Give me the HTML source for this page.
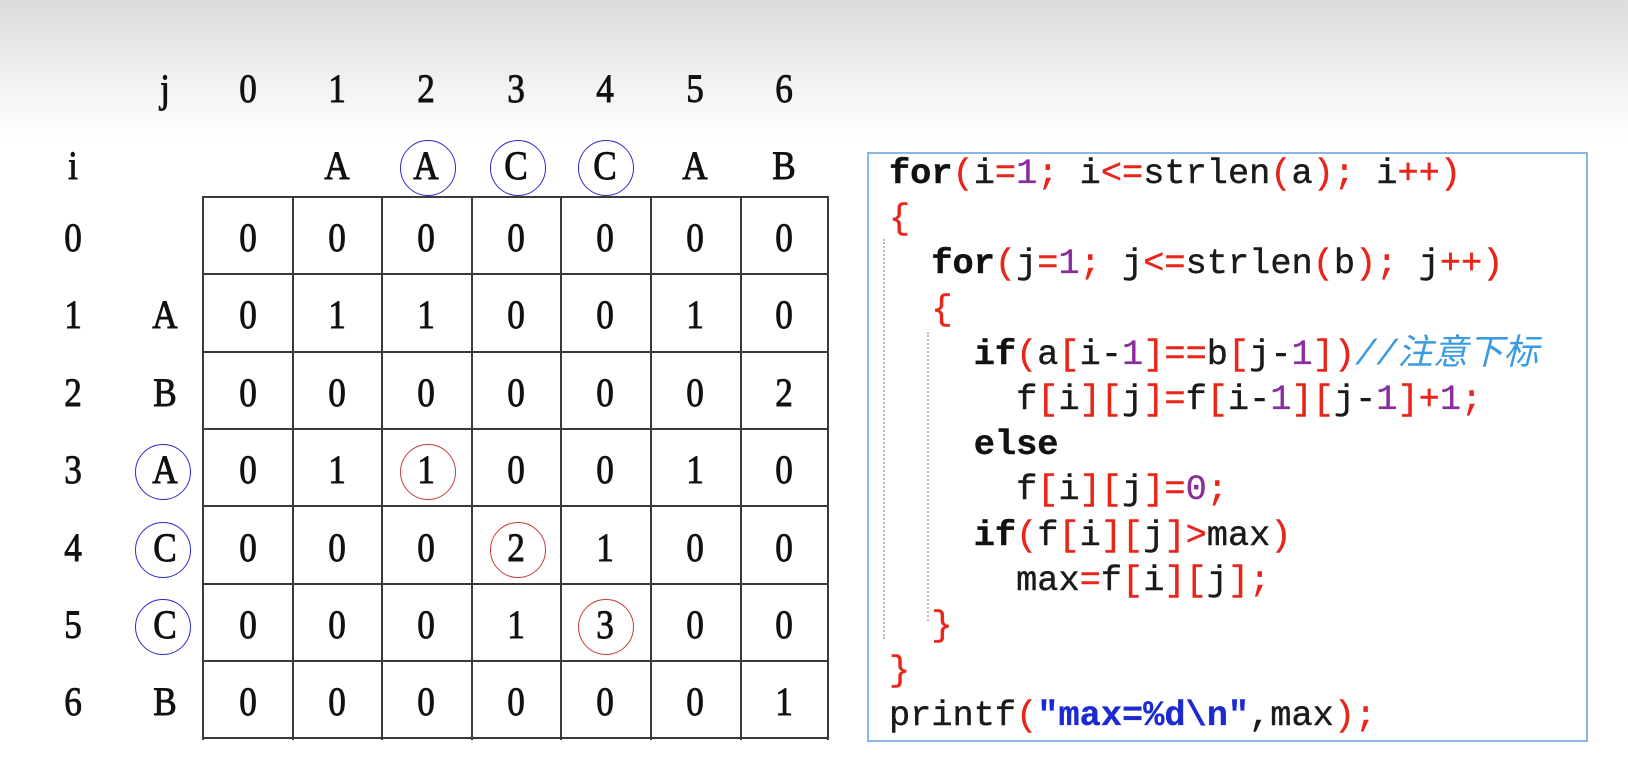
<!DOCTYPE html>
<html><head><meta charset="utf-8">
<style>
html,body{margin:0;padding:0}
body{width:1628px;height:774px;position:relative;overflow:hidden;
background:linear-gradient(#dcdcdc 0px,#ececec 60px,#fbfbfb 120px,#fff 140px,#fff 774px);
font-family:"Liberation Serif",serif;}
.t{position:absolute;width:60px;margin-left:-30px;text-align:center;font-size:40px;line-height:40px;margin-top:-20px;color:#111;transform:scaleX(.88);-webkit-text-stroke:0.9px #111}
.c{position:absolute;width:54px;height:54px;margin-left:-28px;margin-top:-26px;border-radius:50%;border:1.5px solid #2a2ad0}
.r{border-color:#c83a3a}
.hl{position:absolute;left:202px;width:627px;height:2px;background:#3a3a3a}
.vl{position:absolute;top:196px;height:544px;width:2px;background:#3a3a3a}
#box{position:absolute;left:867px;top:152px;width:717px;height:586px;border:2px solid #8ab6e2;background:#fff}
pre{position:absolute;left:889px;top:152px;margin:0;font-family:"Liberation Mono","Noto Sans CJK SC",monospace;font-size:35.3px;line-height:45.2px;color:#1a1a1a;-webkit-text-stroke:0.4px #1a1a1a}
.k{font-weight:bold;color:#111}.p{color:#e8251b;-webkit-text-stroke:0.4px #e8251b}.n{color:#8a2c9c;-webkit-text-stroke:0.3px #8a2c9c}.m{color:#3b9be0;font-style:italic;-webkit-text-stroke:0}.s{color:#1c2ad0;font-weight:bold;-webkit-text-stroke:0.3px #1c2ad0}
.dot{position:absolute;width:0;border-left:2px dotted #bbb}
</style></head><body>
<div class="hl" style="top:196px"></div><div class="hl" style="top:273px"></div><div class="hl" style="top:351px"></div><div class="hl" style="top:428px"></div><div class="hl" style="top:505px"></div><div class="hl" style="top:583px"></div><div class="hl" style="top:660px"></div><div class="hl" style="top:737px"></div>
<div class="vl" style="left:202px"></div><div class="vl" style="left:292px"></div><div class="vl" style="left:381px"></div><div class="vl" style="left:471px"></div><div class="vl" style="left:560px"></div><div class="vl" style="left:650px"></div><div class="vl" style="left:740px"></div><div class="vl" style="left:827px"></div>

<div class="t" style="left:165px;top:89px">j</div>
<div class="t" style="left:248px;top:89px">0</div><div class="t" style="left:337px;top:89px">1</div><div class="t" style="left:426px;top:89px">2</div><div class="t" style="left:516px;top:89px">3</div><div class="t" style="left:605px;top:89px">4</div><div class="t" style="left:695px;top:89px">5</div><div class="t" style="left:784px;top:89px">6</div>
<div class="t" style="left:73px;top:166px">i</div>
<div class="t" style="left:337px;top:166px">A</div><div class="t" style="left:426px;top:166px">A</div><div class="t" style="left:516px;top:166px">C</div><div class="t" style="left:605px;top:166px">C</div><div class="t" style="left:695px;top:166px">A</div><div class="t" style="left:784px;top:166px">B</div>
<div class="c" style="left:428px;top:166px"></div><div class="c" style="left:518px;top:166px"></div><div class="c" style="left:606px;top:166px"></div>

<div class="t" style="left:73px;top:238px">0</div>
<div class="t" style="left:248px;top:238px">0</div><div class="t" style="left:337px;top:238px">0</div><div class="t" style="left:426px;top:238px">0</div><div class="t" style="left:516px;top:238px">0</div><div class="t" style="left:605px;top:238px">0</div><div class="t" style="left:695px;top:238px">0</div><div class="t" style="left:784px;top:238px">0</div>

<div class="t" style="left:73px;top:315px">1</div><div class="t" style="left:165px;top:315px">A</div>
<div class="t" style="left:248px;top:315px">0</div><div class="t" style="left:337px;top:315px">1</div><div class="t" style="left:426px;top:315px">1</div><div class="t" style="left:516px;top:315px">0</div><div class="t" style="left:605px;top:315px">0</div><div class="t" style="left:695px;top:315px">1</div><div class="t" style="left:784px;top:315px">0</div>

<div class="t" style="left:73px;top:393px">2</div><div class="t" style="left:165px;top:393px">B</div>
<div class="t" style="left:248px;top:393px">0</div><div class="t" style="left:337px;top:393px">0</div><div class="t" style="left:426px;top:393px">0</div><div class="t" style="left:516px;top:393px">0</div><div class="t" style="left:605px;top:393px">0</div><div class="t" style="left:695px;top:393px">0</div><div class="t" style="left:784px;top:393px">2</div>

<div class="t" style="left:73px;top:470px">3</div><div class="t" style="left:165px;top:470px">A</div>
<div class="t" style="left:248px;top:470px">0</div><div class="t" style="left:337px;top:470px">1</div><div class="t" style="left:426px;top:470px">1</div><div class="t" style="left:516px;top:470px">0</div><div class="t" style="left:605px;top:470px">0</div><div class="t" style="left:695px;top:470px">1</div><div class="t" style="left:784px;top:470px">0</div>
<div class="c" style="left:163px;top:470px"></div><div class="c r" style="left:428px;top:470px"></div>

<div class="t" style="left:73px;top:548px">4</div><div class="t" style="left:165px;top:548px">C</div>
<div class="t" style="left:248px;top:548px">0</div><div class="t" style="left:337px;top:548px">0</div><div class="t" style="left:426px;top:548px">0</div><div class="t" style="left:516px;top:548px">2</div><div class="t" style="left:605px;top:548px">1</div><div class="t" style="left:695px;top:548px">0</div><div class="t" style="left:784px;top:548px">0</div>
<div class="c" style="left:163px;top:548px"></div><div class="c r" style="left:518px;top:548px"></div>

<div class="t" style="left:73px;top:625px">5</div><div class="t" style="left:165px;top:625px">C</div>
<div class="t" style="left:248px;top:625px">0</div><div class="t" style="left:337px;top:625px">0</div><div class="t" style="left:426px;top:625px">0</div><div class="t" style="left:516px;top:625px">1</div><div class="t" style="left:605px;top:625px">3</div><div class="t" style="left:695px;top:625px">0</div><div class="t" style="left:784px;top:625px">0</div>
<div class="c" style="left:163px;top:625px"></div><div class="c r" style="left:606px;top:625px"></div>

<div class="t" style="left:73px;top:702px">6</div><div class="t" style="left:165px;top:702px">B</div>
<div class="t" style="left:248px;top:702px">0</div><div class="t" style="left:337px;top:702px">0</div><div class="t" style="left:426px;top:702px">0</div><div class="t" style="left:516px;top:702px">0</div><div class="t" style="left:605px;top:702px">0</div><div class="t" style="left:695px;top:702px">0</div><div class="t" style="left:784px;top:702px">1</div>

<div id="box"></div>
<div class="dot" style="left:883px;top:239px;height:400px"></div>
<div class="dot" style="left:927px;top:332px;height:289px"></div>
<pre><span class="k">for</span><span class="p">(</span>i<span class="p">=</span><span class="n">1</span><span class="p">;</span> i<span class="p">&lt;=</span>strlen<span class="p">(</span>a<span class="p">);</span> i<span class="p">++)</span>
<span class="p">{</span>
  <span class="k">for</span><span class="p">(</span>j<span class="p">=</span><span class="n">1</span><span class="p">;</span> j<span class="p">&lt;=</span>strlen<span class="p">(</span>b<span class="p">);</span> j<span class="p">++)</span>
  <span class="p">{</span>
    <span class="k">if</span><span class="p">(</span>a<span class="p">[</span>i-<span class="n">1</span><span class="p">]==</span>b<span class="p">[</span>j-<span class="n">1</span><span class="p">])</span><span class="m">//注意下标</span>
      f<span class="p">[</span>i<span class="p">][</span>j<span class="p">]=</span>f<span class="p">[</span>i-<span class="n">1</span><span class="p">][</span>j-<span class="n">1</span><span class="p">]+</span><span class="n">1</span><span class="p">;</span>
    <span class="k">else</span>
      f<span class="p">[</span>i<span class="p">][</span>j<span class="p">]=</span><span class="n">0</span><span class="p">;</span>
    <span class="k">if</span><span class="p">(</span>f<span class="p">[</span>i<span class="p">][</span>j<span class="p">]&gt;</span>max<span class="p">)</span>
      max<span class="p">=</span>f<span class="p">[</span>i<span class="p">][</span>j<span class="p">];</span>
  <span class="p">}</span>
<span class="p">}</span>
printf<span class="p">(</span><span class="s">"max=%d\n"</span>,max<span class="p">);</span></pre>
</body></html>
